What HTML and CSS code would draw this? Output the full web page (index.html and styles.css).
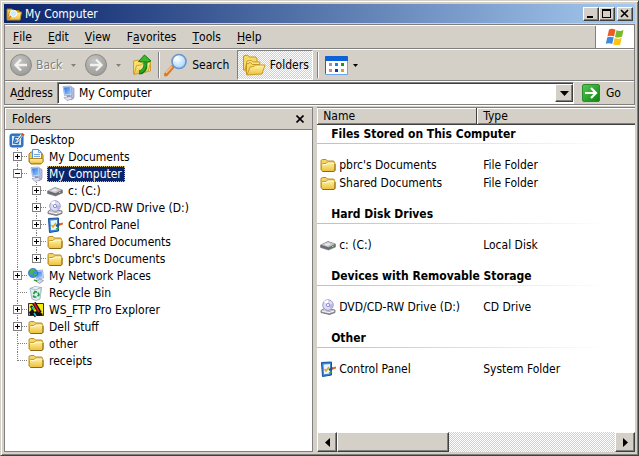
FILE: index.html
```html
<!DOCTYPE html>
<html lang="en">
<head>
<meta charset="utf-8">
<title>My Computer</title>
<link rel="stylesheet" href="styles.css">
</head>
<body>
<svg class="defs" aria-hidden="true">
  <defs>
    <linearGradient id="gold" x1="0" y1="0" x2="0" y2="1"><stop offset="0" stop-color="#fff6a8"/><stop offset="1" stop-color="#eebe3a"/></linearGradient>
    <linearGradient id="blue" x1="0" y1="0" x2="1" y2="1"><stop offset="0" stop-color="#2a6fe0"/><stop offset="1" stop-color="#9ad4ff"/></linearGradient>
    <linearGradient id="steel" x1="0" y1="0" x2="0" y2="1"><stop offset="0" stop-color="#eeeef4"/><stop offset="1" stop-color="#85858d"/></linearGradient>
    <linearGradient id="green" x1="0" y1="0" x2="1" y2="1"><stop offset="0" stop-color="#58c858"/><stop offset="1" stop-color="#0a850a"/></linearGradient>
    <radialGradient id="grey" cx=".4" cy=".3" r=".8"><stop offset="0" stop-color="#c4c4c2"/><stop offset="1" stop-color="#969694"/></radialGradient>
    <radialGradient id="lens" cx=".4" cy=".35" r=".7"><stop offset="0" stop-color="#fff"/><stop offset="1" stop-color="#9bd2fa"/></radialGradient>
  </defs>
  <symbol id="folder" viewBox="0 0 16 16">
    <path d="M1 13V4q0-1.500 1.500-1.500H6L7.500 4H13q1.500 0 1.500 1.500V13z" fill="#f5d565" stroke="#b88c22"/>
    <path d="M2.500 14.500L1.500 13V7.500q0-1 1-1H6L7.500 5H14l1 1v7.500l-1 1z" fill="url(#gold)" stroke="#c99b2c"/>
    <path d="M3 7.500h4L8 6h5.500" fill="none" stroke="#fffbd8"/>
    <path d="M2.500 14.500H14l1-1.500V7" fill="none" stroke="#8b6a1c"/>
  </symbol>
  <symbol id="computer" viewBox="0 0 16 16">
    <path d="M11 2l3 1.500v9L11 15z" fill="#b9bde0" stroke="#8a8fb8" stroke-width=".7"/>
    <path d="M3 1.500L11 1l1 9-7.500.5z" fill="#dfe3f6" stroke="#8d9ccc" stroke-width=".7"/>
    <path d="M4 2.500l6.200-.5.800 7-6 .5z" fill="url(#blue)"/>
    <path d="M7 10.500l3-.2.300 2H7z" fill="#7c83b4"/>
    <path d="M4 12.500l6-1 3.500 2L7 15.500z" fill="#e2e2f0" stroke="#8d8fb0" stroke-width=".7"/>
  </symbol>
  <symbol id="desktop" viewBox="0 0 16 16">
    <rect x="1" y="2" width="13" height="13" rx="2" fill="#2b7bd4" stroke="#2a68b4"/>
    <path d="M3 4h9v9H3z" fill="#d9edff"/>
    <path d="M10 5.500L6 5 4.500 11l4.500.8 1-3.300-3-.5-.5 2" fill="none" stroke="#2367bd" stroke-width="1.300"/>
    <path d="M8.500 9l5-7" stroke="#f0eddb" stroke-width="2.600"/><path d="M9 8.500l4.500-6" stroke="#4b6b94"/>
    <path d="M12.500 1.500l2.500 2" stroke="#e44518" stroke-width="2"/>
  </symbol>
  <symbol id="documents" viewBox="0 0 16 16">
    <path d="M1 5l2-2h10l2 3v7l-2 2H3l-2-2z" fill="#f3cc50" stroke="#a87c12"/>
    <path d="M4.500.5h6l3 3V11h-9z" fill="#f4faff" stroke="#5c8fd4"/>
    <path d="M10.500.5v3h3M6 5.500h6M6 7.500h6" fill="none" stroke="#72a4e2"/>
    <path d="M1.500 9.500H15V13l-1.500 1.500H3L1.500 13z" fill="url(#gold)" stroke="#b98a1c"/>
  </symbol>
  <symbol id="drive" viewBox="0 0 16 16">
    <path d="M.5 8L8 4.500 15.500 7v3L8.500 13 .5 10.500z" fill="#6b6b70" stroke="#77777c" stroke-width=".6"/>
    <path d="M1 7.800L8 4.800l7 2.200-6.500 3.200z" fill="#c4c4ca"/>
    <path d="M4 7.600l4-1.600 3 1-3.500 1.800z" fill="#ececf0"/>
    <path d="M12 9.700l1.500-.7" stroke="#9bf09b"/>
  </symbol>
  <symbol id="cd" viewBox="0 0 16 16">
    <path d="M1 11.500L5 9l10 2v2.500L9.500 15.500 1 13.500z" fill="url(#steel)" stroke="#67676d" stroke-width=".8"/>
    <circle cx="8" cy="6" r="5.300" fill="#dcdcf8" stroke="#8c8cb0" stroke-width=".8"/>
    <path d="M8 6L4 2.500A5 5 0 0 1 8 1z" fill="#fff"/><path d="M8 6l5-1a5 5 0 0 1-2 5z" fill="#b6b6ee"/>
    <circle cx="8" cy="6" r="1.600" fill="#fff" stroke="#7777b8" stroke-width=".8"/>
    <path d="M2 12l7 1.700 5-1.700" fill="none" stroke="#f8f8fc"/>
  </symbol>
  <symbol id="panel" viewBox="0 0 16 16">
    <path d="M1.500 1.500l10-.5v13l-9 1.500z" fill="#3a82d8" stroke="#174f9b"/>
    <path d="M3.500 3.500l6.500-.5v9.500l-6 .8z" fill="#e8f5ff"/>
    <path d="M4.500 8l1.500 2 3-4" fill="none" stroke="#e0a818" stroke-width="1.500"/>
    <path d="M9 9l4-2" stroke="#23568f" stroke-width="2.500"/><path d="M12.500 7.500L16 6.500" stroke="#e46425" stroke-width="2"/>
    <path d="M9 12l3-1" stroke="#3fa23f" stroke-width="1.500"/>
  </symbol>
  <symbol id="network" viewBox="0 0 16 16">
    <path d="M7 3l7.500-1 1 8-7 1z" fill="#e1e8fb" stroke="#8398c8" stroke-width=".7"/>
    <path d="M8 4l5.800-.8.700 6-5.700.8z" fill="url(#blue)"/>
    <path d="M8 13l4-2 3.500 1.500-4 3z" fill="#d3d6e8" stroke="#8287a8" stroke-width=".7"/>
    <circle cx="5" cy="5" r="4.600" fill="#3d8de8" stroke="#1f5cae" stroke-width=".6"/>
    <path d="M2 2.500Q4 0 6 1l1 2-2 1-1 3-2-1zM6 6l2-1 .5 2-2 2z" fill="#49b83e"/>
    <path d="M6 12l3 1" stroke="#30a030" stroke-width="1.500"/>
  </symbol>
  <symbol id="recycle" viewBox="0 0 16 16">
    <path d="M2 3.500L13.500 2.500 12 14l-4 1.500-4-1.500z" fill="#e1eef4" stroke="#94acb8" stroke-width=".8"/>
    <path d="M2 3.500l5-2 6.500 1-5.500 2z" fill="#f9fcff" stroke="#94acb8" stroke-width=".8"/>
    <path d="M5.500 9l1.500-2.500 2 .8M10 7.500l1 2.500-1.500 1M8.500 12H6l-.8-1.500" fill="none" stroke="#219c38" stroke-width="1.700"/>
    <path d="M13 3.500l-1 9.500" stroke="#b3c8d2"/>
  </symbol>
  <symbol id="ftp" viewBox="0 0 16 16">
    <path d="M0 1h16v13H0z" fill="#f6ee08"/>
    <path d="M.5 1.500h15v12H.5z" fill="none" stroke="#333"/>
    <path d="M1 10l3-2 2 2 3-1 6 3-2 2H8l-1 1.500L5 13l-3 .5z" fill="#111"/>
    <path d="M3 4l2 3-1 2 4 4" fill="none" stroke="#111" stroke-width="2.500"/>
    <path d="M4 5l2 3M6 11l2 3" fill="none" stroke="#19c6c6" stroke-width="1.600"/>
    <path d="M6 1l6 10" stroke="#111" stroke-width="4"/>
    <path d="M6 1l5 9" stroke="#e01818" stroke-width="1.600"/>
  </symbol>
  <symbol id="open" viewBox="0 0 16 16">
    <path d="M1 13V3h5l1 1.500h6V13z" fill="#f5cc50" stroke="#a97a14"/>
    <path d="M1 14L3.500 6H15.500L14 14z" fill="url(#gold)" stroke="#b98a1c"/>
    <circle cx="7.500" cy="7.500" r="3.300" fill="#cfeaff" stroke="#f8fcff"/><path d="M5 10l-2.500 3" stroke="#d57a28" stroke-width="1.600"/>
  </symbol>
</svg>

<div class="window">
  <header class="titlebar">
    <svg class="icon"><use href="#open"/></svg>
    <h1>My Computer</h1>
    <button class="caption" aria-label="Minimize"><svg viewBox="0 0 10 9"><path d="M1 7h6v2H1z"/></svg></button>
    <button class="caption" aria-label="Maximize"><svg viewBox="0 0 10 9"><path d="M0 0h9v9H0zM1 2v6h7V2z" fill-rule="evenodd"/></svg></button>
    <button class="caption close" aria-label="Close"><svg viewBox="0 0 10 9"><path d="M1 1l7 7M8 1L1 8" stroke="#000" stroke-width="1.600"/></svg></button>
  </header>

  <div class="bars">
    <div class="menurow">
      <nav class="menu">
        <button><u>F</u>ile</button>
        <button><u>E</u>dit</button>
        <button><u>V</u>iew</button>
        <button>F<u>a</u>vorites</button>
        <button><u>T</u>ools</button>
        <button><u>H</u>elp</button>
      </nav>
      <div class="flag">
        <svg viewBox="0 0 20 18">
          <path d="M4 1.500q3-1.500 6.500.3L9 8.500Q6 7 2.500 8.200z" fill="#ee5a24"/>
          <path d="M11.500 2.200q3.500 1.500 7-.2L17 8.700q-3.500 1.300-7 .2z" fill="#79b829"/>
          <path d="M2.300 9.300Q5.500 8 8.700 9.600L7.200 16Q4 14.500.8 15.800z" fill="#4189e0"/>
          <path d="M9.700 10q3.500 1.500 7 .1L15.200 16.500q-3.500 1.500-7 0z" fill="#fbc312"/>
        </svg>
      </div>
    </div>

    <div class="toolbar">
      <button class="tool off">
        <svg class="round" viewBox="0 0 22 22"><circle cx="11" cy="11" r="10.500" fill="url(#grey)" stroke="#8b8b88"/><path d="M17 11H6M11 5.500L5.500 11l5.500 5.500" fill="none" stroke="#f2f2ef" stroke-width="2.400"/></svg>
        <span>Back</span>
        <svg class="arrow" viewBox="0 0 5 3"><path d="M0 0h5L2.500 3z"/></svg>
      </button>
      <button class="tool off" aria-label="Forward">
        <svg class="round" viewBox="0 0 22 22"><circle cx="11" cy="11" r="10.500" fill="url(#grey)" stroke="#8b8b88"/><path d="M5 11h11M11 5.500l5.500 5.500-5.500 5.500" fill="none" stroke="#f2f2ef" stroke-width="2.400"/></svg>
        <svg class="arrow" viewBox="0 0 5 3"><path d="M0 0h5L2.500 3z"/></svg>
      </button>
      <button class="tool" aria-label="Up">
        <svg class="big" viewBox="0 0 24 24"><path d="M3.500 21V8l5-1 1.500 2 9-2 1.500 2v9z" fill="#f8df6b" stroke="#c9a030"/><path d="M4 21.500l2.500-9 5-.5 1.500-2 7.500-.5-2.500 9z" fill="url(#gold)" stroke="#d0a636"/><path d="M9 19.500q7-.5 6.500-10" fill="none" stroke="#137715" stroke-width="4"/><path d="M9.500 19q6-1 6-10" fill="none" stroke="#2ba825" stroke-width="2.400"/><path d="M8.500 8.500L14.500 2l6.500 6-3.500 1h-5z" fill="#39b82d" stroke="#137715"/></svg>
      </button>
      <span class="sep"></span>
      <button class="tool search">
        <svg class="big" viewBox="0 0 24 24"><path d="M8.500 14L2 21.500" stroke="#d67a2b" stroke-width="4" stroke-linecap="round"/><path d="M8 13.500L2 20" stroke="#ffc48a" stroke-width="1.500"/><circle cx="15" cy="8.500" r="7" fill="url(#lens)" stroke="#6894cf" stroke-width="1.600"/><path d="M10.500 8q.5-4 4-4.500" fill="none" stroke="#fff" stroke-width="1.500"/></svg>
        <span>Search</span>
      </button>
      <button class="tool pressed" aria-pressed="true">
        <svg class="big" viewBox="0 0 24 24"><path d="M1.500 17V3l4-1 2 2H14l1 2v9z" fill="#f6d864" stroke="#c49526"/><path d="M3 18l2-10 4-.5L11 9h7l-2 9z" fill="url(#gold)" stroke="#c99b2c"/><path d="M4.500 21.500V11l4-1.500 2 2H18v8z" fill="#f6d864" stroke="#c49526"/><path d="M5 22l3-8 4-.5 1.500-1.500H23l-3 9z" fill="url(#gold)" stroke="#c99b2c"/></svg>
        <span>Folders</span>
      </button>
      <span class="sep"></span>
      <button class="tool views" aria-label="Views">
        <svg class="grid" viewBox="0 0 23 19"><rect x=".5" y=".5" width="22" height="18" rx="1" fill="#fff" stroke="#1565d0"/><path d="M0 1q0-1 1-1h21q1 0 1 1v4H0z" fill="#0f62d6"/><path d="M22.500 5v13.500H1" fill="none" stroke="#6ba5ed"/><path d="M4 7h3v3H4z" fill="#9a8fc0"/><path d="M10 7h3v3h-3z" fill="#1784df"/><path d="M16 7h3v3h-3z" fill="#159a20"/><path d="M4 13h3v3H4z" fill="#f48058"/><path d="M10 13h3v3h-3z" fill="#0b3ca8"/><path d="M16 13h3v3h-3z" fill="#d8a41c"/></svg>
        <svg class="arrow" viewBox="0 0 5 3"><path d="M0 0h5L2.500 3z"/></svg>
      </button>
    </div>

    <div class="addressbar">
      <label for="address">A<u>d</u>dress</label>
      <div class="combo">
        <svg class="icon"><use href="#computer"/></svg>
        <input id="address" type="text" value="My Computer">
        <button class="drop" aria-label="Show addresses"><svg viewBox="0 0 9 5"><path d="M0 0h9L4.500 5z"/></svg></button>
      </div>
      <button class="go">
        <svg viewBox="0 0 18 18"><rect x=".5" y=".5" width="17" height="17" rx="1.500" fill="url(#green)" stroke="#2c8a2c"/><path d="M3 9h11M9 4l5 5-5 5" fill="none" stroke="#fff" stroke-width="2.200"/></svg>
        <span>Go</span>
      </button>
    </div>
  </div>

  <main class="panes">
    <aside class="folders">
      <div class="panehead">
        <h2>Folders</h2>
        <button aria-label="Close folders"><svg viewBox="0 0 8 8"><path d="M.5.5l7 7M7.500.5l-7 7" stroke="#000" stroke-width="1.600"/></svg></button>
      </div>
      <div class="tree">
        <div class="node root"><svg class="icon"><use href="#desktop"/></svg><span>Desktop</span></div>
        <ul>
          <li><div class="node"><button class="exp" aria-label="Expand"></button><svg class="icon"><use href="#documents"/></svg><span>My Documents</span></div></li>
          <li><div class="node"><button class="exp less" aria-label="Collapse"></button><svg class="icon"><use href="#computer"/></svg><span class="selected">My Computer</span></div>
            <ul>
              <li><div class="node"><button class="exp" aria-label="Expand"></button><svg class="icon"><use href="#drive"/></svg><span>c: (C:)</span></div></li>
              <li><div class="node"><button class="exp" aria-label="Expand"></button><svg class="icon"><use href="#cd"/></svg><span>DVD/CD-RW Drive (D:)</span></div></li>
              <li><div class="node"><button class="exp" aria-label="Expand"></button><svg class="icon"><use href="#panel"/></svg><span>Control Panel</span></div></li>
              <li><div class="node"><button class="exp" aria-label="Expand"></button><svg class="icon"><use href="#folder"/></svg><span>Shared Documents</span></div></li>
              <li><div class="node"><button class="exp" aria-label="Expand"></button><svg class="icon"><use href="#folder"/></svg><span>pbrc's Documents</span></div></li>
            </ul>
          </li>
          <li><div class="node"><button class="exp" aria-label="Expand"></button><svg class="icon"><use href="#network"/></svg><span>My Network Places</span></div></li>
          <li><div class="node leaf"><svg class="icon"><use href="#recycle"/></svg><span>Recycle Bin</span></div></li>
          <li><div class="node"><button class="exp" aria-label="Expand"></button><svg class="icon"><use href="#ftp"/></svg><span>WS_FTP Pro Explorer</span></div></li>
          <li><div class="node"><button class="exp" aria-label="Expand"></button><svg class="icon"><use href="#folder"/></svg><span>Dell Stuff</span></div></li>
          <li><div class="node leaf"><svg class="icon"><use href="#folder"/></svg><span>other</span></div></li>
          <li><div class="node leaf"><svg class="icon"><use href="#folder"/></svg><span>receipts</span></div></li>
        </ul>
      </div>
    </aside>

    <section class="files">
      <table>
        <thead><tr><th class="name">Name</th><th>Type</th></tr></thead>
        <tbody>
          <tr class="group first"><th colspan="2">Files Stored on This Computer</th></tr>
          <tr><td><svg class="icon"><use href="#folder"/></svg>pbrc's Documents</td><td>File Folder</td></tr>
          <tr><td><svg class="icon"><use href="#folder"/></svg>Shared Documents</td><td>File Folder</td></tr>
        </tbody>
        <tbody>
          <tr class="group"><th colspan="2">Hard Disk Drives</th></tr>
          <tr><td><svg class="icon"><use href="#drive"/></svg>c: (C:)</td><td>Local Disk</td></tr>
        </tbody>
        <tbody>
          <tr class="group"><th colspan="2">Devices with Removable Storage</th></tr>
          <tr><td><svg class="icon"><use href="#cd"/></svg>DVD/CD-RW Drive (D:)</td><td>CD Drive</td></tr>
        </tbody>
        <tbody>
          <tr class="group"><th colspan="2">Other</th></tr>
          <tr><td><svg class="icon"><use href="#panel"/></svg>Control Panel</td><td>System Folder</td></tr>
        </tbody>
      </table>
      <div class="scroll">
        <button aria-label="Scroll left"><svg viewBox="0 0 5 9"><path d="M5 0v9L0 4.500z"/></svg></button>
        <div class="thumb"></div>
        <button aria-label="Scroll right"><svg viewBox="0 0 5 9"><path d="M0 0v9l5-4.500z"/></svg></button>
      </div>
    </section>
  </main>
</div>
</body>
</html>
```
FILE: styles.css
```css
:root {
  --face: #d4d0c8;
  --shade: #808080;
  --dark: #404040;
  --text: "DejaVu Sans Condensed", "Noto Sans", sans-serif;
}

* { box-sizing: border-box; }

body {
  margin: 0;
  font: 12px/16px var(--text);
  color: #000;
}

button, input { font: inherit; color: inherit; margin: 0; }

button {
  display: flex;
  align-items: center;
  justify-content: center;
  padding: 0;
  border: 0;
  background: none;
}

svg { display: block; flex: none; }
h1, h2 { margin: 0; font: inherit; }
u { text-underline-offset: 2px; }

.defs { position: absolute; width: 0; height: 0; }
.icon { width: 16px; height: 16px; }

.window {
  display: flex;
  flex-direction: column;
  height: 100vh;
  padding: 2px;
  background: var(--face);
  border: 1px solid;
  border-color: var(--face) var(--dark) var(--dark) var(--face);
  box-shadow: inset 1px 1px #fff, inset -1px -1px var(--shade);
}

/* Title bar */
.titlebar {
  display: flex;
  align-items: center;
  height: 19px;
  margin: 1px 1px 1px;
  padding: 0 2px;
  color: #fff;
  background: linear-gradient(to right, #0a246a, #a6caf0);
}

.titlebar h1 { flex: 1; padding-left: 3px; }

.caption, .drop, .scroll button, .thumb {
  background: var(--face);
  border: 1px solid;
  border-color: #fff var(--dark) var(--dark) #fff;
  box-shadow: inset -1px -1px var(--shade);
}

.caption { width: 16px; height: 14px; }
.caption svg { width: 10px; height: 9px; }
.close { margin-left: 2px; }

/* Menu, toolbar and address bar */
.bars {
  margin: 0 1px;
  border: 1px solid var(--shade);
  box-shadow: 0 1px #fff;
}

.menurow, .toolbar, .addressbar {
  display: flex;
  border-top: 1px solid #fff;
}

.menurow { height: 24px; border-bottom: 1px solid var(--shade); }
.menu { display: flex; flex: 1; gap: 16px; padding-left: 8px; border-right: 1px solid var(--shade); }

.flag {
  display: flex;
  align-items: center;
  justify-content: center;
  width: 38px;
  background: #fff;
}
.flag svg { width: 20px; height: 18px; }

.toolbar { height: 32px; padding-left: 5px; border-bottom: 1px solid var(--shade); }
.tool { gap: 4px; }
.tool .arrow { width: 5px; height: 3px; margin-left: 5px; }
.round { width: 22px; height: 22px; }
.big { width: 24px; height: 24px; }
.off { margin-right: 9px; color: var(--shade); text-shadow: 1px 1px #fff; }
.off .arrow { fill: var(--shade); }
.sep { width: 2px; margin: 2px 4px; background: var(--shade); border-right: 1px solid #fff; }
.search { margin-right: 8px; }
.grid { width: 23px; height: 19px; }
.views { gap: 0; padding-left: 2px; }

.pressed {
  width: 76px;
  border: 1px solid;
  border-color: var(--shade) #fff #fff var(--shade);
}

.pressed, .scroll {
  background: repeating-conic-gradient(#fff 0 25%, var(--face) 0 50%) 0 0 / 2px 2px;
}

.addressbar { align-items: center; height: 23px; padding: 0 0 0 5px; gap: 4px; }

.combo {
  display: flex;
  align-items: center;
  flex: 1;
  height: 22px;
  padding-left: 2px;
  background: #fff;
  border: 1px solid;
  border-color: var(--shade) #fff #fff var(--shade);
  box-shadow: inset 1px 1px var(--dark);
}
.combo input { flex: 1; min-width: 0; height: 18px; padding: 0 0 0 3px; border: 0; background: none; outline: 0; }
.drop { width: 18px; height: 18px; }
.drop svg { width: 9px; height: 5px; }
.go { gap: 6px; width: 56px; padding-left: 4px; justify-content: flex-start; }
.go svg { width: 18px; height: 18px; }

/* Panes */
.panes {
  display: flex;
  flex: 1;
  min-height: 0;
  gap: 4px;
  margin: 2px 1px 1px;
}

.folders {
  display: flex;
  flex-direction: column;
  width: 49%;
  background: #fff;
  border: 1px solid var(--shade);
}

.panehead {
  display: flex;
  align-items: center;
  justify-content: space-between;
  height: 22px;
  padding: 0 8px 0 7px;
  background: var(--face);
  border-bottom: 1px solid var(--shade);
  box-shadow: inset 1px 1px #fff;
}
.panehead svg { width: 8px; height: 8px; }

.tree { padding: 1px 0 0 4px; }
.tree ul { margin: 0; padding: 0; list-style: none; }
.tree li { position: relative; }
.tree li ul { padding-left: 19px; }

.tree li::before {
  content: "";
  position: absolute;
  left: 8px;
  top: 0;
  bottom: 0;
  border-left: 1px dotted var(--shade);
}
.tree li:last-child::before { bottom: auto; height: 9px; }

.node { display: flex; align-items: center; height: 17px; position: relative; }
.node span { margin-left: 3px; padding: 0 3px 0 2px; white-space: nowrap; }
.node.leaf { padding-left: 19px; }

.tree li > .node::before {
  content: "";
  position: absolute;
  left: 9px;
  top: 8px;
  width: 9px;
  border-top: 1px dotted var(--shade);
}

.node .selected { color: #fff; background: #0a246a; outline: 1px dotted #d8c060; outline-offset: -1px; }

.exp {
  position: relative;
  flex: none;
  width: 9px;
  height: 9px;
  margin: 0 6px 0 4px;
  border: 1px solid var(--shade);
  background:
    linear-gradient(#000, #000) center / 5px 1px no-repeat,
    linear-gradient(#000, #000) center / 1px 5px no-repeat,
    #fff;
}
.exp.less { background: linear-gradient(#000, #000) center / 5px 1px no-repeat, #fff; }

/* File list */
.files {
  display: flex;
  flex-direction: column;
  justify-content: space-between;
  flex: 1;
  background: #fff;
  border-top: 1px solid var(--shade);
}

table { width: 100%; table-layout: fixed; border-collapse: separate; border-spacing: 0; }
th { padding: 0; text-align: left; font-weight: normal; }

thead th {
  height: 17px;
  padding-left: 6px;
  background: var(--face);
  border-bottom: 1px solid var(--dark);
  box-shadow: inset 1px 1px #fff, inset 0 -1px var(--shade);
}
thead .name { width: 160px; border-right: 1px solid var(--dark); }

td { height: 18px; padding: 0 0 0 6px; white-space: nowrap; }
td:first-child { padding-left: 3px; }
td .icon { display: inline-block; vertical-align: middle; margin-right: 3px; }

.group th {
  height: 44px;
  padding: 14px 0 0 14px;
  font-weight: bold;
  vertical-align: top;
  background: linear-gradient(to right, #a3c4ee, #fff 92%) 0 31px / 100% 1px no-repeat;
}
.group.first th { height: 31px; padding-top: 1px; background-position: 0 18px; }

.scroll { display: flex; height: 20px; }
.scroll button { width: 20px; }
.scroll svg { width: 5px; height: 9px; }
.scroll .thumb { width: 112px; margin-right: auto; }
```
